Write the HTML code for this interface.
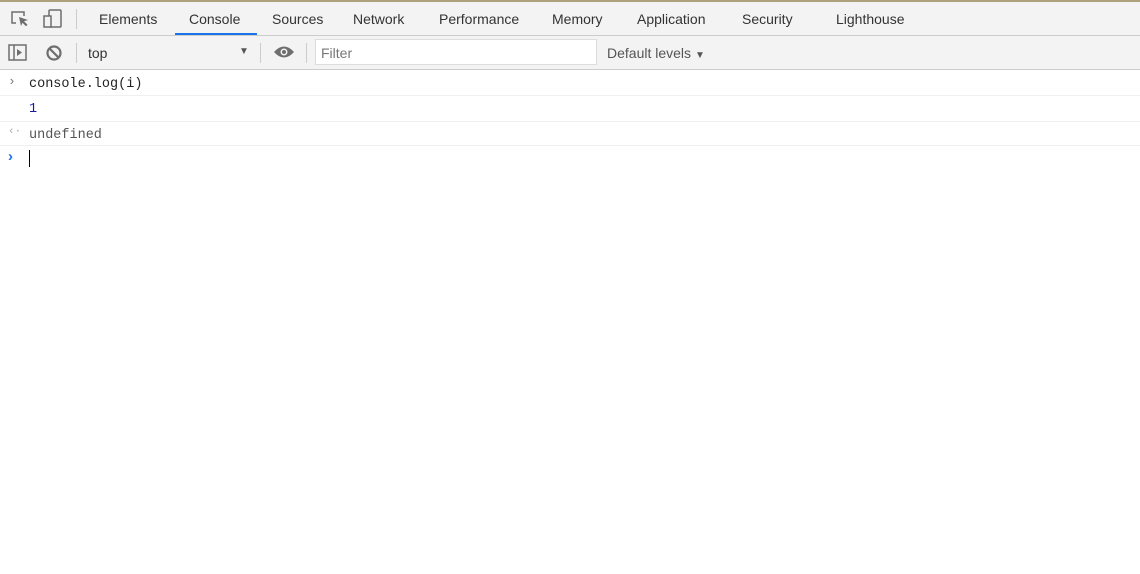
<!DOCTYPE html>
<html><head><meta charset="utf-8"><style>
*{box-sizing:border-box;margin:0;padding:0}
body{width:1140px;height:574px;background:#fff;font-family:"Liberation Sans",sans-serif;position:relative;overflow:hidden}
.top{position:absolute;left:0;top:0;width:1140px;height:2px;background:#aea27c}
.tabs{position:absolute;top:2px;left:0;width:1140px;height:34px;background:#f3f3f3;border-bottom:1px solid #ccc}
.tab{position:absolute;top:9px;font-size:14px;color:#333}
.sel{position:absolute;left:175px;top:31px;width:82px;height:2px;background:#1a73e8}
.tb{position:absolute;top:36px;left:0;width:1140px;height:34px;background:#f3f3f3;border-bottom:1px solid #ccc}
.sep{position:absolute;width:1px;background:#ccc}
.row{position:absolute;left:0;width:1140px;border-bottom:1px solid #f0f0f0;font-family:"Liberation Mono",monospace;font-size:13.5px}
.row span{position:absolute;left:29px}
</style></head><body>
<div class="top"></div>
<div class="tabs">
<svg style="position:absolute;left:10px;top:7px" width="20" height="20" viewBox="0 0 20 20"><path d="M6 14H2V3h12v4" fill="none" stroke="#6e6e6e" stroke-width="1.5"/><path d="M9 8l9 3-4 1.2 3.5 3.5-1.5 1.5-3.5-3.5L11 17z" fill="#6e6e6e"/></svg>
<svg style="position:absolute;left:42px;top:6px" width="22" height="22" viewBox="0 0 22 22"><rect x="7" y="2" width="12" height="17" rx="1" fill="none" stroke="#6e6e6e" stroke-width="1.5"/><rect x="2" y="8" width="7" height="11" fill="#f3f3f3" stroke="#6e6e6e" stroke-width="1.5"/></svg>
<div class="sep" style="left:76px;top:7px;height:20px"></div>
<div class="tab" style="left:99px">Elements</div>
<div class="tab" style="left:189px">Console</div>
<div class="tab" style="left:272px">Sources</div>
<div class="tab" style="left:353px">Network</div>
<div class="tab" style="left:439px">Performance</div>
<div class="tab" style="left:552px">Memory</div>
<div class="tab" style="left:637px">Application</div>
<div class="tab" style="left:742px">Security</div>
<div class="tab" style="left:836px">Lighthouse</div>
<div class="sel"></div>
</div>
<div class="tb">
<svg style="position:absolute;left:8px;top:7px" width="20" height="20" viewBox="0 0 20 20"><rect x="1" y="2" width="17" height="15" fill="none" stroke="#6e6e6e" stroke-width="1.5"/><line x1="6" y1="2" x2="6" y2="17" stroke="#6e6e6e" stroke-width="1.5"/><path d="M9 6l5 3.5-5 3.5z" fill="#6e6e6e"/></svg>
<svg style="position:absolute;left:45px;top:8px" width="18" height="18" viewBox="0 0 18 18"><circle cx="9" cy="9" r="6.5" fill="none" stroke="#6e6e6e" stroke-width="2.2"/><line x1="4.5" y1="4.5" x2="13.5" y2="13.5" stroke="#6e6e6e" stroke-width="2.2"/></svg>
<div class="sep" style="left:76px;top:7px;height:20px"></div>
<div style="position:absolute;left:88px;top:9px;font-size:14px;color:#333">top</div>
<div style="position:absolute;left:239px;top:10px;font-size:10px;color:#555">▼</div>
<div class="sep" style="left:260px;top:7px;height:20px"></div>
<svg style="position:absolute;left:273px;top:9px" width="22" height="14" viewBox="0 0 22 14"><path d="M1 7Q11 -4 21 7Q11 18 1 7z" fill="#6e6e6e"/><circle cx="11" cy="7" r="3.5" fill="#f3f3f3"/><circle cx="11" cy="7" r="2" fill="#6e6e6e"/></svg>
<div class="sep" style="left:306px;top:7px;height:20px"></div>
<div style="position:absolute;left:315px;top:3px;width:282px;height:26px;background:#fff;border:1px solid #ddd;font-size:14px;color:#777;padding:5px 0 0 5px">Filter</div>
<div style="position:absolute;left:607px;top:9px;font-size:14px;color:#555">Default levels <span style="font-size:10px">▼</span></div>
</div>
<div class="row" style="top:70px;height:26px"><i style="position:absolute;left:8px;top:4px;font-style:normal;color:#777;font-size:13px">›</i><span style="top:7px;color:#222">console.log(i)</span></div>
<div class="row" style="top:96px;height:26px"><span style="top:6px;color:#1a1aa6">1</span></div>
<div class="row" style="top:122px;height:24px"><i style="position:absolute;left:8px;top:4px;font-style:normal;color:#aaa;font-size:11px">‹·</i><span style="top:6px;color:#555">undefined</span></div>
<div style="position:absolute;left:8px;top:148px;color:#1a73e8;font-weight:bold;font-size:15px;font-family:'Liberation Sans',sans-serif">›</div>
<div style="position:absolute;left:29px;top:150px;width:1px;height:17px;background:#000"></div>
</body></html>
